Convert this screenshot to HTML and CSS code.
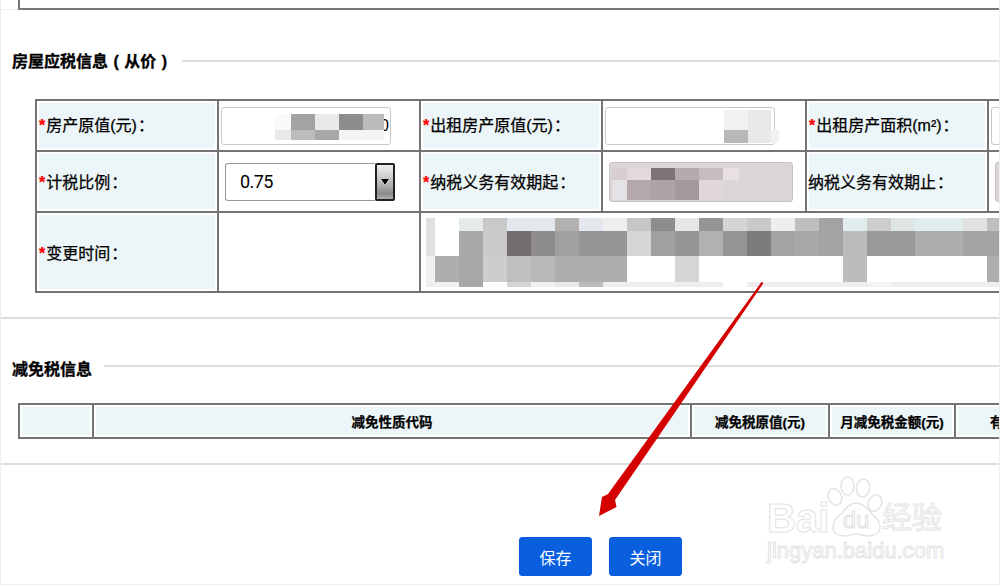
FILE: index.html
```html
<!DOCTYPE html>
<html lang="zh-CN">
<head>
<meta charset="utf-8">
<title>房屋应税信息</title>
<link rel="stylesheet" href="styles.css">
</head>
<body>
<div class="page">
  <div class="top"><div class="top-side"></div><div class="top-box"></div></div>

  <div class="title first"><h2>房屋应税信息 ( 从价 )</h2><span class="title-line"></span></div>

  <table class="form">
    <colgroup><col class="f1"><col class="f2"><col class="f3"><col class="f4"><col class="f5"><col class="f6"></colgroup>
    <tr class="r1">
      <th><b>*</b>房产原值(元)<span class="colon">：</span></th>
      <td><div class="input in-a">0
        <div class="mask mask-a" aria-hidden="true">
          <i class="tfa"></i><i class="ta4"></i><i class="te9"></i><i class="t8f"></i><i class="tbd"></i>
          <i class="te9"></i><i class="tbd"></i><i class="ta9"></i><i class="tf5"></i><i class="tf5"></i>
        </div></div></td>
      <th><b>*</b>出租房产原值(元)<span class="colon">：</span></th>
      <td><div class="input in-a">
        <div class="mask mask-b" aria-hidden="true">
          <i class="tf0"></i><i class="te9"></i><i></i>
          <i class="tb9"></i><i class="te9"></i><i class="tf0"></i>
        </div></div></td>
      <th><b>*</b>出租房产面积(m²)<span class="colon">：</span></th>
      <td><div class="input in-a"></div></td>
    </tr>
    <tr class="r2">
      <th><b>*</b>计税比例<span class="colon">：</span></th>
      <td><div class="select"><span class="select-value">0.75</span><span class="select-btn"><span class="select-arrow"></span></span></div></td>
      <th><b>*</b>纳税义务有效期起<span class="colon">：</span></th>
      <td><div class="date">
        <div class="mask mask-c" aria-hidden="true">
          <i class="p1"></i><i class="p2"></i><i class="p3"></i><i class="p4"></i><i class="p5"></i><i class="p6"></i>
          <i class="p7"></i><i class="p8"></i><i class="p9"></i><i class="p10"></i><i class="p11"></i><i class="p12"></i>
        </div></div></td>
      <th class="no-star">纳税义务有效期止<span class="colon">：</span></th>
      <td><div class="date"></div></td>
    </tr>
    <tr class="r3">
      <th><b>*</b>变更时间<span class="colon">：</span></th>
      <td></td>
      <td colspan="4" class="mosaic-cell">
        <div class="mosaic" aria-hidden="true">
          <i class="te0"></i><i></i><i class="te5"></i><i class="tc9"></i><i class="tbl"></i><i class="tbl"></i><i class="tb3"></i><i class="tbl"></i><i class="tee"></i><i class="tc6"></i><i class="t8f"></i><i class="te6"></i><i class="t96"></i><i class="td6"></i><i class="tc9"></i><i class="tee"></i><i class="tbf"></i><i class="ta4"></i><i class="tcy"></i><i class="tcd"></i><i class="tdd"></i><i class="tcy"></i><i class="tcy"></i><i class="te2"></i><i class="tbf"></i>

          <i class="te0"></i><i></i><i class="ta9"></i><i class="tc9"></i><i class="t72"></i><i class="t8f"></i><i class="ta0"></i><i class="t96"></i><i class="t96"></i><i class="td6"></i><i class="ta0"></i><i class="t96"></i><i class="tb3"></i><i class="t96"></i><i class="t7d"></i><i class="ta4"></i><i class="ta9"></i><i class="ta4"></i><i class="tbd"></i><i class="t9b"></i><i class="t9b"></i><i class="taf"></i><i class="taf"></i><i class="ta4"></i><i class="ta4"></i>

          <i class="tf0"></i><i class="taf"></i><i class="ta9"></i><i class="tcd"></i><i class="tbf"></i><i class="tb9"></i><i class="taf"></i><i class="taf"></i><i class="taf"></i><i></i><i></i><i class="td6"></i><i></i><i></i><i></i><i></i><i></i><i></i><i class="tbd"></i><i></i><i></i><i></i><i></i><i></i><i class="taf"></i>

          <i class="tee"></i><i class="tf0"></i><i class="ta9"></i><i></i><i class="td6"></i><i class="tf0"></i><i class="te9"></i><i class="tbd"></i><i class="tee"></i><i class="tee"></i><i class="tee"></i><i class="tee"></i><i class="tee"></i><i></i><i class="tee"></i><i class="tee"></i><i class="tee"></i><i class="tee"></i><i class="tee"></i><i class="tf5"></i><i class="tee"></i><i class="tee"></i><i class="tee"></i><i class="tee"></i><i class="tee"></i>
        </div>
      </td>
    </tr>
  </table>

  <div class="rule rule-a"></div>

  <div class="title second"><h2>减免税信息</h2><span class="title-line"></span></div>

  <table class="relief">
    <colgroup><col class="g1"><col class="g2"><col class="g3"><col class="g4"><col class="g5"></colgroup>
    <tr>
      <th></th>
      <th>减免性质代码</th>
      <th>减免税原值(元)</th>
      <th>月减免税金额(元)</th>
      <th>有效期起</th>
    </tr>
  </table>

  <div class="rule rule-b"></div>

  <div class="actions">
    <button class="btn" type="button">保存</button>
    <button class="btn" type="button">关闭</button>
  </div>

  <svg class="arrow" width="1000" height="585" viewBox="0 0 1000 585" aria-hidden="true">
    <polygon points="761.5,282 763.5,283 615,500 616.5,507 599,516 602,497 608,494"/>
  </svg>

  <div class="watermark" aria-hidden="true">
    <span class="wm-bai">Bai</span>
    <svg class="wm-paw" width="62" height="62" viewBox="0 0 62 62">
      <ellipse cx="10" cy="21" rx="6.5" ry="8.5" transform="rotate(-25 10 21)"/>
      <ellipse cx="22.5" cy="10" rx="6.5" ry="9"/>
      <ellipse cx="38" cy="12" rx="6.5" ry="9" transform="rotate(8 38 12)"/>
      <ellipse cx="50" cy="27" rx="6.5" ry="8.5" transform="rotate(25 50 27)"/>
      <path d="M31 27c-6 0-10 5-14 10-4 4-9 7-9 14 0 6 5 9 12 9 4 0 7-2 11-2s8 2 12 2c7 0 12-3 12-9 0-7-5-10-9-14-4-5-9-10-15-10z"/>
      <text x="31" y="52">du</text>
    </svg>
    <span class="wm-jy">经验</span>
    <span class="wm-url">jingyan.baidu.com</span>
  </div>
</div>
</body>
</html>
```

FILE: styles.css
```css
* { box-sizing: border-box; }
html, body { margin: 0; padding: 0; background: #fff; }
body {
  font-family: "Liberation Sans", "Noto Sans CJK SC", sans-serif;
  color: #000;
}
.page {
  position: relative;
  width: 1000px;
  height: 585px;
  overflow: hidden;
  background: #fff;
  border-left: 1px solid #eee;
  border-right: 1px solid #eee;
  border-bottom: 1px solid #eee;
}

.top { display: flex; height: 10px; }
.top-side { width: 17px; border-bottom: 1px solid #eee; }
.top-box { flex: 1; border-left: 2px solid #777; border-bottom: 2px solid #777; margin-right: -1px; }

.title { display: flex; align-items: flex-start; height: 22px; margin-left: 11px; margin-right: -1px; }
.title h2 {
  margin: 0;
  font-size: 16px;
  line-height: 22px;
  font-weight: 700;
  white-space: nowrap;
  -webkit-text-stroke: 0.3px #000;
}
.title-line { flex: 1; height: 2px; background: #ddd; }
.title.first { margin-top: 40px; margin-bottom: 27px; }
.title.first h2 { margin-top: 1px; word-spacing: 1px; }
.title.first .title-line { margin-left: 15px; margin-top: 10px; }
.title.second { margin-top: 38px; margin-bottom: 24px; }
.title.second h2 { margin-top: 2px; }
.title.second .title-line { margin-left: 12px; margin-top: 8px; }

table { border-collapse: collapse; table-layout: fixed; }
th, td { padding: 0; border: 2px solid #747474; }
th { background: #ecf5f7; box-shadow: inset 0 0 0 2px #fff; }

.form { width: 1152px; margin-left: 34px; }
.form th {
  font-size: 16px;
  font-weight: 400;
  text-align: left;
  padding-left: 2px;
  white-space: nowrap;
  -webkit-text-stroke: 0.25px #000;
}
.form th.no-star { padding-left: 1px; }
.form th b {
  margin-right: 1px;
  color: #f00;
  font-weight: 700;
  -webkit-text-stroke: 0.25px #f00;
}
.colon { font-family: "Noto Sans CJK TC", sans-serif; margin-left: 1px; }
.f1 { width: 182px; }
.f2 { width: 202px; }
.f3 { width: 182px; }
.f4 { width: 204px; }
.f5 { width: 182px; }
.f6 { width: 200px; }
.r1 { height: 51px; }
.r1 th { padding-bottom: 3px; }
.r2 { height: 61px; }
.r2 th { padding-bottom: 2px; }
.r3 { height: 80px; }

.input {
  position: relative;
  width: 170px;
  height: 38px;
  margin-left: 2px;
  padding-right: 1px;
  border: 1px solid #c8c8c8;
  border-radius: 3px;
  font-size: 16px;
  line-height: 36px;
  text-align: right;
  background: #fff;
}
.mask { position: absolute; display: grid; }
.mask i { display: block; }
.mask-a { left: 53px; top: 6px; grid-template-columns: 16px 24px 24px 24px 21px; grid-template-rows: 16px 10px; }
.mask-b { left: 118px; top: 2px; grid-template-columns: 24px 23px 8px; grid-template-rows: 20px 13px; }
.mask-c { left: 2px; top: 5px; grid-template-columns: 15px 24px 24px 24px 24px 16px; grid-template-rows: 12px 20px; }

.select { display: flex; width: 170px; height: 38px; margin-left: 6px; }
.select-value {
  flex: 1;
  padding-left: 14px;
  font-family: Roboto, sans-serif;
  font-size: 18px;
  letter-spacing: -0.6px;
  line-height: 36px;
  border: 1px solid #999;
  border-right: 0;
  border-radius: 3px 0 0 3px;
}
.select-btn {
  display: flex;
  align-items: center;
  justify-content: center;
  width: 20px;
  border: 2px solid #222;
  border-radius: 2px;
  background: linear-gradient(#f0f0f0, #c8c8c8 40%, #8a8a8a 85%, #b0b0b0);
}
.select-arrow {
  width: 0;
  height: 0;
  border-left: 4.5px solid transparent;
  border-right: 4.5px solid transparent;
  border-top: 6px solid #000;
  filter: drop-shadow(0 1px 0 #fff);
}

.date {
  position: relative;
  width: 184px;
  height: 40px;
  margin-left: 6px;
  border: 1px solid #c9c2c4;
  border-radius: 3px;
  background: #dcd5d8;
}
.p1 { background: #d8cdd1; }
.p2 { background: #e3dadd; }
.p3 { background: #7d7476; }
.p4 { background: #b5aaae; }
.p5 { background: #c6bdc0; }
.p6 { background: #e8e0e3; }
.p7 { background: #e4e2e7; }
.p8 { background: #b4a8ac; }
.p9 { background: #aca4a6; }
.p10 { background: #a4989d; }
.p11 { background: #e0d8da; }
.p12 { background: #dcd5d8; }

.mosaic-cell { vertical-align: top; padding: 5px 0 0 5px; }
.mosaic {
  display: grid;
  grid-template-columns: 9px repeat(24, 24px);
  grid-template-rows: 13px 25px 26px 5px;
}
.mosaic i { display: block; }
.t72 { background: #726e6e; }
.t7d { background: #7d7c7c; }
.t8f { background: #8f8c8c; }
.t96 { background: #969494; }
.t9b { background: #9b9999; }
.ta0 { background: #a1a0a0; }
.ta4 { background: #a4a2a2; }
.ta9 { background: #a9a7a7; }
.taf { background: #afaeae; }
.tb3 { background: #b3b0b0; }
.tb9 { background: #b9b8b8; }
.tbd { background: #bdbbbb; }
.tbf { background: #c0bfbf; }
.tc6 { background: #c6c6c6; }
.tc9 { background: #c9c9c9; }
.tcd { background: #cdcdcd; }
.td6 { background: #d5d5d5; }
.tdd { background: #dde5e5; }
.te0 { background: #e0e0e0; }
.te2 { background: #e2e2e2; }
.te5 { background: #e5ebeb; }
.te6 { background: #e6e6e6; }
.te9 { background: #e9e9e9; }
.tee { background: #eeeeee; }
.tf0 { background: #f1f1f1; }
.tf5 { background: #f5f3f3; }
.tfa { background: #fafafa; }
.tbl { background: #e2e8ee; }
.tcy { background: #e1ecee; }

.rule { height: 2px; background: #dcdcdc; margin-right: -1px; }
.rule-a { margin-top: 24px; }
.rule-b { margin-top: 24px; }

.relief { width: 1060px; margin-left: 17px; }
.relief tr { height: 34px; }
.relief th {
  font-size: 13.5px;
  font-weight: 700;
  text-align: center;
  white-space: nowrap;
  -webkit-text-stroke: 0.25px #000;
}
.g1 { width: 74px; }
.g2 { width: 598px; }
.g3 { width: 138px; }
.g4 { width: 126px; }
.g5 { width: 124px; }

.actions { display: flex; gap: 17px; margin-top: 72px; padding-left: 518px; }
.btn {
  width: 73px;
  height: 39px;
  padding: 0;
  border: 1px solid #0a5ce0;
  border-radius: 3px;
  background: #0a5fdf;
  color: #fff;
  font: 400 16px "Liberation Sans", "Noto Sans CJK SC", sans-serif;
}

.arrow { position: absolute; left: -1px; top: 0; pointer-events: none; }
.arrow polygon { fill: #d40000; }

.watermark { position: absolute; left: 0; top: 0; width: 1000px; height: 585px; pointer-events: none; }
.watermark span {
  position: absolute;
  color: #fff;
  -webkit-text-stroke: 1px #e4e4e4;
  white-space: nowrap;
}
.wm-bai { left: 766px; top: 495px; font-size: 40px; line-height: 46px; font-weight: 700; }
.wm-jy { left: 881px; top: 498px; font-size: 30px; line-height: 40px; }
.wm-url { left: 766px; top: 536px; font-size: 22px; line-height: 30px; }
.wm-paw { position: absolute; left: 824px; top: 476px; }
.wm-paw ellipse, .wm-paw path { fill: #fff; stroke: #e4e4e4; stroke-width: 1.5; }
.wm-paw text {
  font: 400 24px "Liberation Sans", sans-serif;
  fill: #fff;
  stroke: #e0e0e0;
  stroke-width: 1;
  text-anchor: middle;
}
```
